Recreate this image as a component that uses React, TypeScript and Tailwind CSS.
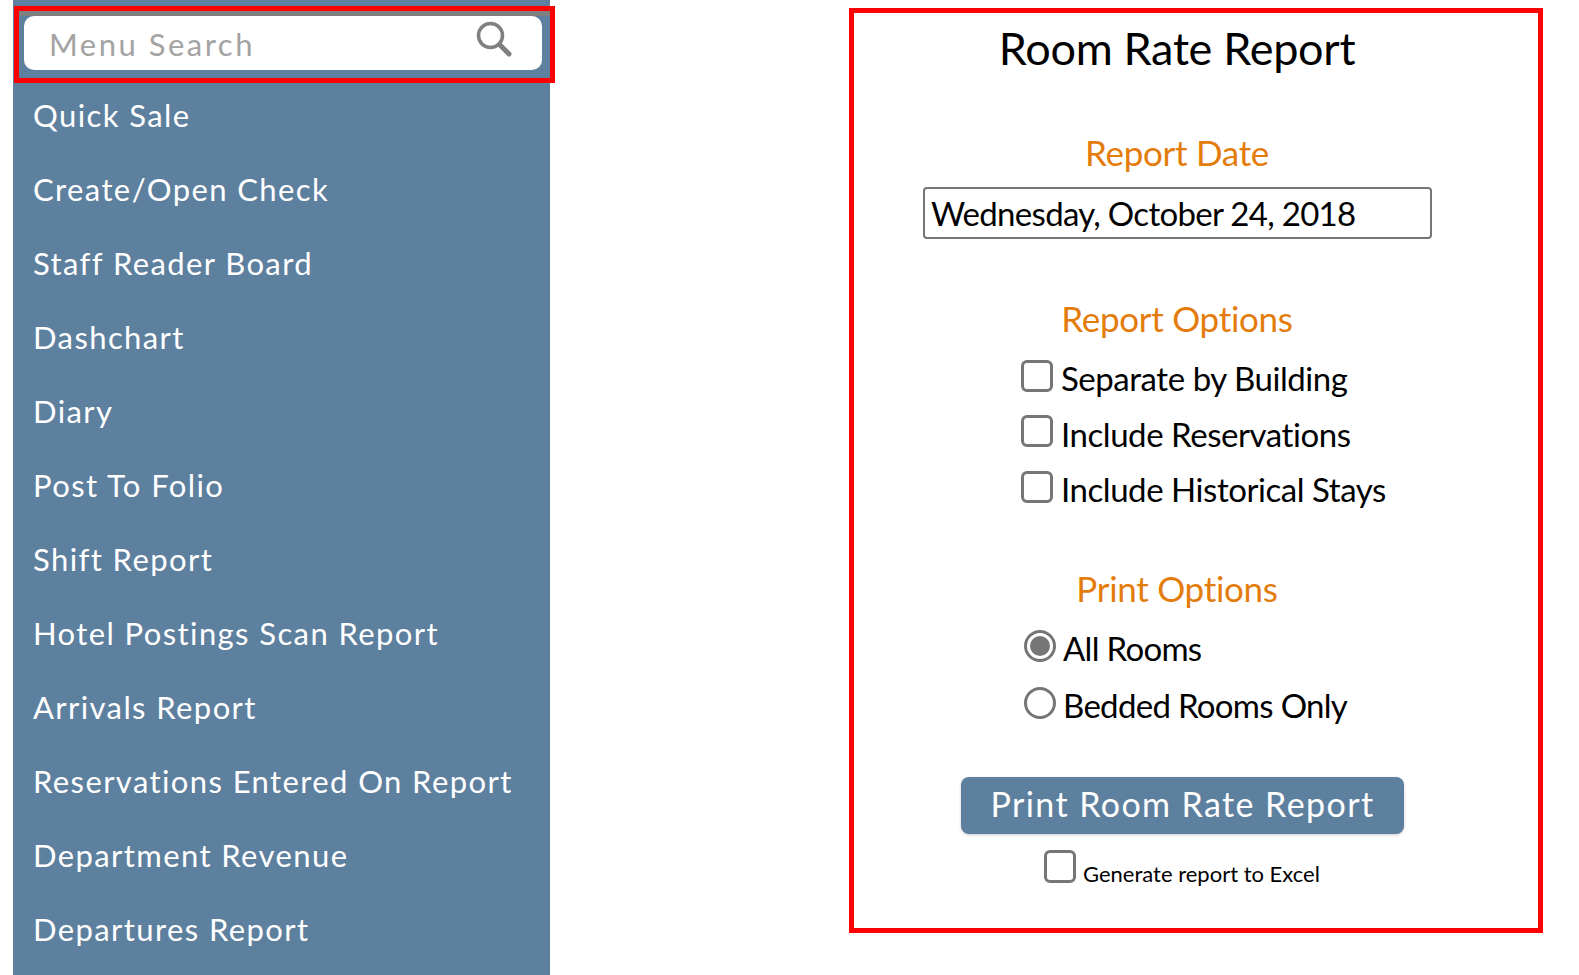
import React from 'react'

const MENU_ITEMS = [
  'Quick Sale',
  'Create/Open Check',
  'Staff Reader Board',
  'Dashchart',
  'Diary',
  'Post To Folio',
  'Shift Report',
  'Hotel Postings Scan Report',
  'Arrivals Report',
  'Reservations Entered On Report',
  'Department Revenue',
  'Departures Report',
]

const REPORT_OPTIONS = ['Separate by Building', 'Include Reservations', 'Include Historical Stays']

const Sidebar: React.FC = () => (
  <aside className="w-[537px] h-full shrink-0 bg-[#5e809f] pt-[6px]">
    {/* search box with the red callout round it */}
    <div className="h-[77px] w-[541px] ml-[1px] border-[5px] border-[#ff0000] bg-[#5e809f] relative">
      <div className="h-[5px] bg-[#808080]" />
      <div className="ml-[5px] w-[518px] h-[54px] bg-white rounded-[10px] flex items-center justify-between pl-[25px] pr-[31px]">
        <input
          placeholder="Menu Search"
          className="w-[300px] mt-[2px] text-[31px] tracking-[2.5px] outline-none placeholder:text-[#a3a3a3]"
        />
        <svg width="38" height="38" viewBox="0 0 38 38" fill="none" stroke="#808080" className="-mt-[8px] -mr-[2px]">
          <circle cx="15.5" cy="15.5" r="12" strokeWidth="3.5" />
          <path d="M24.5 24.5 L34 34" strokeWidth="5" strokeLinecap="round" />
        </svg>
      </div>
    </div>
    <nav className="-mt-[5px]">
      {MENU_ITEMS.map((item) => (
        <div key={item} className="h-[74px] flex items-center pl-[20px] text-white text-[31px] tracking-[1.4px] whitespace-nowrap">
          {item}
        </div>
      ))}
    </nav>
  </aside>
)

const Heading: React.FC<{ children: React.ReactNode; className?: string }> = ({ children, className }) => (
  <div className={`text-center text-[35px] leading-[44px] text-[#e47c0c] tracking-[-0.3px] ${className ?? ''}`}>{children}</div>
)

const ReportPanel: React.FC = () => (
  <section className="ml-[299px] mt-[8px] w-[694px] h-[925px] border-[5px] border-[#ff0000] pr-[38px] flex flex-col text-black">
    <h1 className="text-center text-[45px] leading-[56px] mt-[7px] tracking-[-0.3px]">Room Rate Report</h1>

    <Heading className="mt-[54px]">Report Date</Heading>
    <div className="mt-[13px] ml-[69px] w-[509px] h-[52px] border-2 border-[#767676] rounded-[4px] flex items-center pl-[6px] pt-[1px] text-[33px] tracking-[-0.7px]">
      Wednesday, October 24, 2018
    </div>

    <Heading className="mt-[57px]">Report Options</Heading>
    <div className="mt-[11px] ml-[167px] flex flex-col">
      {REPORT_OPTIONS.map((label) => (
        <label key={label} className="h-[55.5px] flex items-center gap-[8px] text-[33px] tracking-[-0.45px]">
          <input
            type="checkbox"
            className="appearance-none w-[32px] h-[32px] border-[3px] border-[#767676] rounded-[6px] bg-white -mt-[6px]"
          />
          {label}
        </label>
      ))}
    </div>

    <Heading className="mt-[48px]">Print Options</Heading>
    <div className="mt-[11px] ml-[170px] flex flex-col">
      <label className="h-[57px] flex items-center gap-[7px] text-[33px] tracking-[-0.7px]">
        <span className="w-[32px] h-[32px] rounded-full border-[3px] border-[#767676] flex items-center justify-center -mt-[6px]">
          <span className="w-[20px] h-[20px] rounded-full bg-[#767676]" />
        </span>
        All Rooms
      </label>
      <label className="h-[57px] flex items-center gap-[7px] text-[33px] tracking-[-0.7px]">
        <span className="w-[32px] h-[32px] rounded-full border-[3px] border-[#767676] -mt-[6px]" />
        Bedded Rooms Only
      </label>
    </div>

    <button className="mt-[42px] ml-[107px] w-[443px] h-[57px] pb-[3px] rounded-[8px] bg-[#5e809f] text-white text-[34px] tracking-[1.4px] shadow-[0_1px_3px_rgba(0,0,0,0.2)]">
      Print Room Rate Report
    </button>

    <label className="mt-[16px] ml-[190px] flex items-end gap-[7px] text-[22px] leading-[28px]">
      <input
        type="checkbox"
        className="appearance-none w-[32px] h-[33px] border-[3px] border-[#767676] rounded-[6px] bg-white mb-[5px]"
      />
      Generate report to Excel
    </label>
  </section>
)

export default function App() {
  return (
    <div className="w-[1579px] h-[975px] overflow-hidden bg-white flex font-['Lato','Noto_Sans',sans-serif] pl-[13px]">
      <Sidebar />
      <ReportPanel />
    </div>
  )
}
